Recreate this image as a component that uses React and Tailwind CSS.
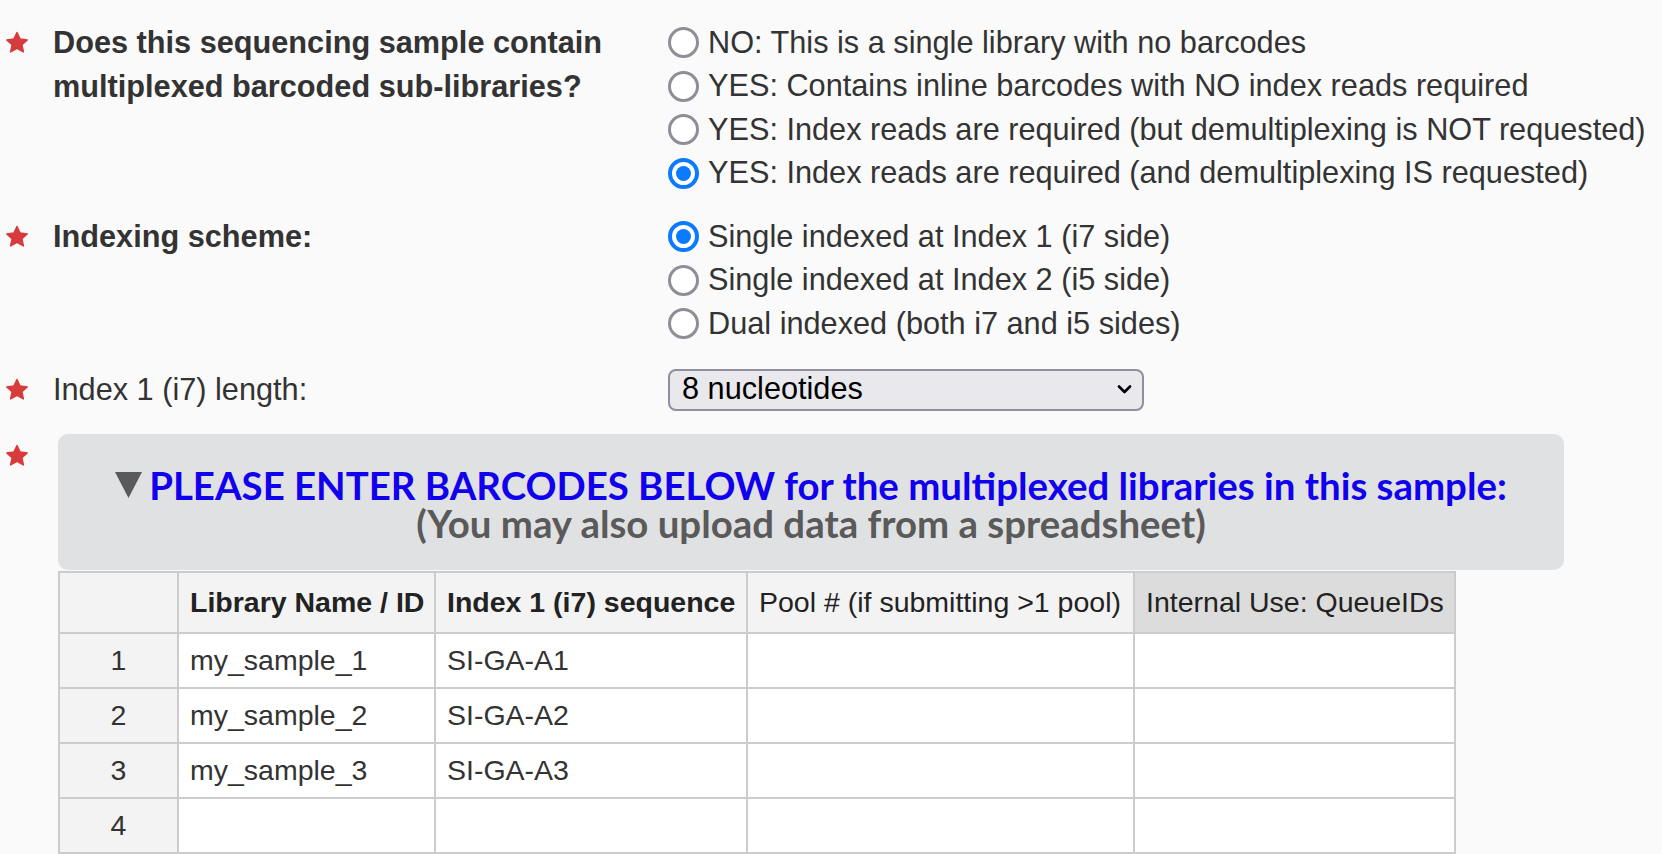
import React from "react";

const Star = () => (
  <svg width="24" height="23" viewBox="0 0 24 23" className="block">
    <path
      d="M12 1.5l3.1 6.6 7.1.8-5.3 4.9 1.5 7.1L12 17.3l-6.4 3.6 1.5-7.1-5.3-4.9 7.1-.8z"
      fill="#d83b3b"
      stroke="#d83b3b"
      strokeWidth="1.5"
      strokeLinejoin="round"
    />
  </svg>
);

const Radio = ({ label, checked }) => (
  <div className="flex items-center h-[43.5px]">
    {checked ? (
      <span className="w-[31px] h-[31px] rounded-full border-[4px] border-[#0a7aff] bg-white flex items-center justify-center shrink-0">
        <span className="w-[15px] h-[15px] rounded-full bg-[#0a7aff]" />
      </span>
    ) : (
      <span className="w-[31px] h-[31px] rounded-full border-[3px] border-[#8e8e96] bg-white shrink-0" />
    )}
    <span className="ml-[9px] whitespace-nowrap">{label}</span>
  </div>
);

const FormRow = ({ label, bold, children, className = "" }) => (
  <div className={`flex items-start ${className}`}>
    <div className="w-[53px] h-[43.5px] flex items-center pl-[5px] shrink-0">
      <Star />
    </div>
    <div className={`w-[615px] shrink-0 leading-[43.5px] ${bold ? "font-bold" : ""}`}>{label}</div>
    <div className="flex-1">{children}</div>
  </div>
);

const rows = [
  { n: 1, name: "my_sample_1", seq: "SI-GA-A1" },
  { n: 2, name: "my_sample_2", seq: "SI-GA-A2" },
  { n: 3, name: "my_sample_3", seq: "SI-GA-A3" },
  { n: 4, name: "", seq: "" },
];

const cell = "border-r-2 border-b-2 border-[#cccccc] flex items-center px-[11px] whitespace-nowrap overflow-hidden";

export default function App() {
  return (
    <div className="min-h-screen w-full bg-[#fafafa] text-[#333] font-['Liberation_Sans',Arial,sans-serif] text-[30.7px] pt-[21px] overflow-hidden">
      <FormRow
        bold
        label={
          <>
            Does this sequencing sample contain
            <br />
            multiplexed barcoded sub-libraries?
          </>
        }
      >
        <Radio label="NO: This is a single library with no barcodes" />
        <Radio label="YES: Contains inline barcodes with NO index reads required" />
        <Radio label="YES: Index reads are required (but demultiplexing is NOT requested)" />
        <Radio checked label="YES: Index reads are required (and demultiplexing IS requested)" />
      </FormRow>

      <FormRow bold label="Indexing scheme:" className="mt-[20px]">
        <Radio checked label="Single indexed at Index 1 (i7 side)" />
        <Radio label="Single indexed at Index 2 (i5 side)" />
        <Radio label="Dual indexed (both i7 and i5 sides)" />
      </FormRow>

      <div className="flex items-center mt-[23px] h-[42px]">
        <div className="w-[53px] flex items-center pl-[5px] shrink-0">
          <Star />
        </div>
        <div className="w-[615px] shrink-0 leading-[42px]">Index 1 (i7) length:</div>
        <div className="w-[476px] h-[42px] rounded-[8px] border-2 border-[#8f8f9d] bg-[#e9e9ed] flex items-center justify-between pl-[12px] pr-[10px] text-black">
          <span>8 nucleotides</span>
          <svg width="15" height="9" viewBox="0 0 15 9">
            <path d="M2 1.5l5.5 5.5 5.5-5.5" fill="none" stroke="#000" strokeWidth="2.6" strokeLinecap="round" strokeLinejoin="round" />
          </svg>
        </div>
      </div>

      <div className="flex items-start mt-[23px]">
        <div className="w-[58px] h-[43.5px] flex items-center pl-[5px] shrink-0">
          <Star />
        </div>
        <div className="flex flex-col">
          <div className="w-[1506px] h-[136px] rounded-[10px] bg-[#e0e1e3] flex flex-col items-center pt-[32px] font-['Lato','Noto_Sans',sans-serif] font-bold text-[38.4px] leading-[38px]">
            <div className="flex items-center whitespace-nowrap">
              <svg width="27" height="26" viewBox="0 0 27 26" className="mr-[7px]">
                <path d="M0 0h27L13.5 26z" fill="#5a5a5a" />
              </svg>
              <span className="text-[#1100ee]">PLEASE ENTER BARCODES BELOW for the multiplexed libraries in this sample:</span>
            </div>
            <div className="text-[#5a5a5a] whitespace-nowrap">(You may also upload data from a spreadsheet)</div>
          </div>

          <div className="mt-[1px] w-[1398px] border-l-2 border-t-2 border-[#cccccc] grid grid-cols-[119px_257px_312px_387px_321px] text-[28.5px]">
            <div className={`${cell} h-[61px] bg-[#f3f3f3]`} />
            <div className={`${cell} h-[61px] bg-[#f3f3f3] font-bold text-[#222]`}>Library Name / ID</div>
            <div className={`${cell} h-[61px] bg-[#f3f3f3] font-bold text-[#222]`}>Index 1 (i7) sequence</div>
            <div className={`${cell} h-[61px] bg-[#f3f3f3] text-[#222]`}>Pool # (if submitting &gt;1 pool)</div>
            <div className={`${cell} h-[61px] bg-[#dcdcdc] text-[#222]`}>Internal Use: QueueIDs</div>
            {rows.map((r) => (
              <React.Fragment key={r.n}>
                <div className={`${cell} h-[55px] bg-[#f3f3f3] justify-center`}>{r.n}</div>
                <div className={`${cell} h-[55px] bg-white`}>{r.name}</div>
                <div className={`${cell} h-[55px] bg-white`}>{r.seq}</div>
                <div className={`${cell} h-[55px] bg-white`} />
                <div className={`${cell} h-[55px] bg-white`} />
              </React.Fragment>
            ))}
          </div>
        </div>
      </div>
    </div>
  );
}
